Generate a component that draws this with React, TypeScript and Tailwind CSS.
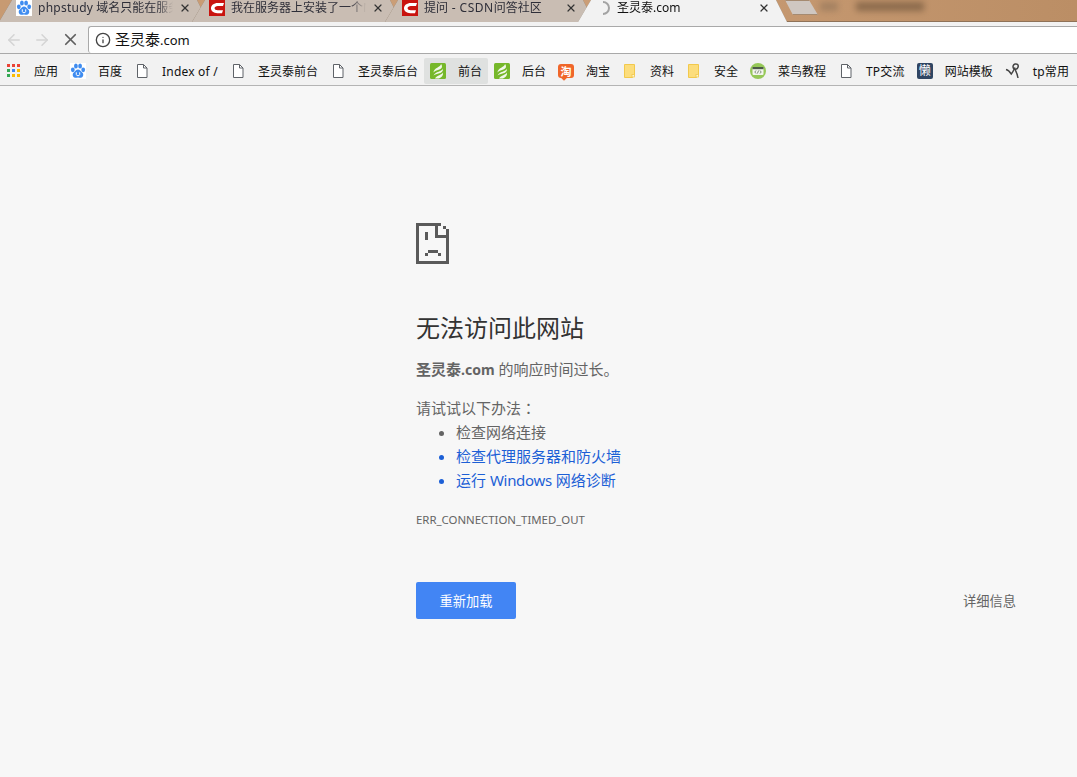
import { ArrowLeft, ArrowRight, Info, X } from 'lucide-react';
import type { ReactNode } from 'react';

const FONT = 'font-["Noto_Sans","Noto_Sans_CJK_SC",sans-serif]';

const BaiduIcon = () => (
  <svg width="16" height="16" viewBox="0 0 16 16" className="shrink-0">
    <rect width="16" height="16" fill="#ffffff" />
    <g fill="#3f8cf0">
      <ellipse cx="2.800" cy="6.800" rx="1.900" ry="2.400" />
      <ellipse cx="5.900" cy="3" rx="1.900" ry="2.500" />
      <ellipse cx="10.100" cy="3" rx="1.900" ry="2.500" />
      <ellipse cx="13.200" cy="6.800" rx="1.900" ry="2.400" />
      <path d="M8 6.400c2 0 2.600 1.900 4.200 3.100 1.800 1.400 1.300 5-1.300 5.200-1.100.1-1.900-.3-2.900-.3s-1.800.4-2.900.3C2.500 14.500 2 10.900 3.800 9.500 5.400 8.300 6 6.400 8 6.400z" />
    </g>
    <path d="M6.300 9.300v2.200c0 1.700 3.400 1.700 3.400 0V9.300" fill="none" stroke="#ffffff" strokeWidth="1" />
  </svg>
);

const CsdnIcon = () => (
  <svg width="16" height="16" viewBox="0 0 16 16" className="shrink-0">
    <rect width="16" height="16" fill="#c9140f" />
    <path d="M15 3H8.800C4.800 3 2 5.300 2 8.300c0 2.900 2.600 4.900 6.400 4.900H13l1-3H8.800C6.800 10.200 5.600 9.400 5.600 8.200 5.600 7 6.900 6 8.900 6H14z" fill="#ffffff" />
  </svg>
);

const Spinner = () => (
  <svg width="16" height="16" viewBox="0 0 16 16" className="shrink-0">
    <path d="M8 2a6 6 0 0 1 0 12" fill="none" stroke="#a3a3a3" strokeWidth="2" />
  </svg>
);

const DocIcon = () => (
  <svg width="16" height="16" viewBox="0 0 16 16" className="shrink-0">
    <path d="M3.500 1.500h6l3.500 3.500v9.500h-9.500z" fill="#ffffff" stroke="#5f6368" strokeWidth="1" />
    <path d="M9.500 1.500v3.500h3.500" fill="none" stroke="#5f6368" strokeWidth="1" />
  </svg>
);

const AppsIcon = () => {
  const colors = ['#ea4335', '#ea4335', '#ea4335', '#34a853', '#4285f4', '#fbbc05', '#34a853', '#fbbc05', '#fbbc05'];
  return (
    <svg width="16" height="16" viewBox="0 0 16 16" className="shrink-0">
      {colors.map((c, i) => (
        <rect key={i} x={1 + (i % 3) * 5} y={1 + Math.floor(i / 3) * 5} width="3" height="3" fill={c} />
      ))}
    </svg>
  );
};

const LeafIcon = () => (
  <svg width="16" height="16" viewBox="0 0 16 16" className="shrink-0">
    <rect width="16" height="16" rx="1.500" fill="#76b82a" />
    <g fill="#ffffff" fillOpacity="0.9">
      <path d="M11 1C11 4 3.500 5 3.500 9.500 6 6.500 12 7 12 3.500 12 2.500 11.600 1.600 11 1z" />
      <path d="M13 5.500C12.500 8.500 5 8.500 3.500 12.500 6 10 13.500 11.500 13 5.500z" />
      <path d="M13 9.500C12 12 7 12 5 15.500h4C11.500 14.500 13.500 12.500 13 9.500z" />
    </g>
  </svg>
);

const TaobaoIcon = () => (
  <span className="relative flex h-[14px] w-4 shrink-0 items-center justify-center rounded-[3px] bg-[#f0662a] text-[11px] leading-none font-bold text-white">
    淘
    <span className="absolute -bottom-[2px] left-[4px] size-[4px] rotate-45 bg-[#f0662a]" />
  </span>
);

const FolderIcon = () => (
  <svg width="16" height="16" viewBox="0 0 16 16" className="shrink-0">
    <path d="M2.500 1.500h10v10.500l-2 2.500h-8z" fill="#fcdd7c" stroke="#f2c94c" strokeWidth="1" />
    <rect x="10" y="11.500" width="2.500" height="2.500" fill="#fff5cf" stroke="#f2c94c" strokeWidth="0.800" />
  </svg>
);

const RunoobIcon = () => (
  <svg width="16" height="16" viewBox="0 0 16 16" className="shrink-0">
    <circle cx="8" cy="8" r="8" fill="#96c858" />
    <rect x="2.500" y="4" width="11" height="8" rx="1" fill="#f3f5ee" />
    <rect x="2.500" y="4" width="11" height="2.200" fill="#4c5a48" />
    <path d="M6 7.500 4.800 9 6 10.500M10 7.500 11.200 9 10 10.500M8.600 7.500 7.400 10.500" fill="none" stroke="#4c5a48" strokeWidth="0.700" />
  </svg>
);

const LanIcon = () => (
  <span className="flex size-4 shrink-0 items-center justify-center rounded-[2px] bg-[#2f4562] text-[12px] leading-none text-white">
    懒
  </span>
);

const SketchIcon = () => (
  <svg width="16" height="16" viewBox="0 0 16 16" className="shrink-0">
    <path d="M1 6.500c2.500.5 4 2.500 5.300 4.500C8 9 9 6.500 10 4.500M10 1c2.200-.5 3.800 1 3 3.200S9.500 7 8.500 5.300 8.200 1.500 10 1zM10.300 7c1.200 2.300 2.200 5 2.700 8" fill="none" stroke="#444444" strokeWidth="1.500" />
  </svg>
);

const bookmarks: { icon: ReactNode; label: string; active?: boolean }[] = [
  { icon: <AppsIcon />, label: '应用' },
  { icon: <BaiduIcon />, label: '百度' },
  { icon: <DocIcon />, label: 'Index of /' },
  { icon: <DocIcon />, label: '圣灵泰前台' },
  { icon: <DocIcon />, label: '圣灵泰后台' },
  { icon: <LeafIcon />, label: '前台', active: true },
  { icon: <LeafIcon />, label: '后台' },
  { icon: <TaobaoIcon />, label: '淘宝' },
  { icon: <FolderIcon />, label: '资料' },
  { icon: <FolderIcon />, label: '安全' },
  { icon: <RunoobIcon />, label: '菜鸟教程' },
  { icon: <DocIcon />, label: 'TP交流' },
  { icon: <LanIcon />, label: '网站模板' },
  { icon: <SketchIcon />, label: 'tp常用' },
];

const Tab = ({ icon, title, active }: { icon: ReactNode; title: ReactNode; active?: boolean }) => (
  <div className={`-ml-4 first:-ml-px ${active ? 'z-10' : ''} [filter:drop-shadow(0_0_0.6px_#7d6a58)]`}>
    <div
      className={`flex h-[22px] w-[209px] items-center gap-1.5 pr-[17px] pb-[6px] pl-[17px] [clip-path:polygon(13px_0,198px_0,209px_100%,0_100%)] ${
        active ? 'bg-[#f2f2f2]' : 'bg-[#c9bdb3]'
      }`}
    >
      {icon}
      <span
        className={`min-w-0 flex-1 overflow-hidden text-xs leading-4 whitespace-nowrap [mask-image:linear-gradient(to_right,black_88%,transparent)] ${
          active ? 'text-[#111111]' : 'text-[#2e2e38]'
        }`}
      >
        {title}
      </span>
      <X size={12} strokeWidth={2.4} className="shrink-0 text-[#333333]" />
    </div>
  </div>
);

const BrowserChrome = () => (
  <header className="shrink-0">
    <div className="relative flex h-[22px] border-b border-[#8f7258] bg-gradient-to-r from-[#c79a72] via-[#cc9f78] to-[#bb8e65]">
      <Tab
        icon={<BaiduIcon />}
        title={
          <>
            <span className="tracking-[0.25px]">phpstudy</span> 域名只能在服务器上访问
          </>
        }
      />
      <Tab icon={<CsdnIcon />} title="我在服务器上安装了一个N" />
      <Tab
        icon={<CsdnIcon />}
        title={
          <>
            提问<span className="tracking-[0.5px]"> - CSDN</span>问答社区
          </>
        }
      />
      <Tab icon={<Spinner />} title="圣灵泰.com" active />
      <div className="ml-[-2px] h-[15px] w-[33px] border border-[#a58a70] bg-[#cfc7c1] [clip-path:polygon(0_0,24px_0,100%_100%,8px_100%)]" />
      <div className="absolute top-[2px] left-[820px] h-[9px] w-[18px] bg-[#8f7358] opacity-60 blur-[3px]" />
      <div className="absolute top-[2px] left-[856px] h-[9px] w-[68px] bg-[#75593f] opacity-70 blur-[3px]" />
    </div>
    <div className="flex h-[32px] items-end border-b border-[#a9a9a9] bg-[#f2f2f2]">
      <div className="flex h-[27px] w-[88px] shrink-0 items-center pl-[5px]">
        <ArrowLeft size={18} strokeWidth={2} className="text-[#d4d4d4]" />
        <ArrowRight size={18} strokeWidth={2} className="ml-[10px] text-[#d4d4d4]" />
        <X size={19} strokeWidth={2.2} className="ml-[10px] text-[#5f5f5f]" />
      </div>
      <div className="flex h-[27px] flex-1 items-center gap-1 rounded-tl-[3px] rounded-bl-[3px] border-t border-l border-[#a9a9a9] bg-white pb-px pl-[6px]">
        <Info size={16} strokeWidth={2} className="text-[#444444]" />
        <span className="text-[15px] leading-5 text-[#111111]">
          圣灵泰<span className="text-[13px]">.com</span>
        </span>
      </div>
    </div>
    <nav className="flex h-[32px] items-start border-b border-[#b4b4b4] bg-[#f2f2f2] pt-[4px]">
      {bookmarks.map((b) => (
        <div
          key={b.label}
          className={`flex h-[26px] items-center gap-3 rounded-[2px] px-1.5 text-xs whitespace-nowrap text-[#111111] ${
            b.active ? 'bg-[#dfe1e0]' : ''
          }`}
        >
          {b.icon}
          <span className={`pt-[2px] ${/[a-zA-Z]/.test(b.label) ? 'tracking-[0.2px]' : ''}`}>{b.label}</span>
        </div>
      ))}
    </nav>
  </header>
);

const SadPage = () => (
  <svg width="33" height="41" viewBox="0 0 33 41" fill="#5a5a5a" shapeRendering="crispEdges">
    <rect x="0" y="0" width="25" height="3" />
    <rect x="0" y="0" width="3" height="41" />
    <rect x="0" y="38" width="33" height="3" />
    <rect x="30" y="6" width="3" height="35" />
    <rect x="27" y="3" width="3" height="3" />
    <rect x="19" y="0" width="3" height="15" />
    <rect x="19" y="12" width="14" height="3" />
    <rect x="9" y="9" width="3" height="8" />
    <rect x="12" y="27" width="10" height="3" />
    <rect x="9" y="30" width="3" height="3" />
    <rect x="22" y="30" width="3" height="3" />
  </svg>
);

export default function App() {
  return (
    <div className={`flex h-[777px] flex-col overflow-hidden bg-[#f7f7f7] ${FONT}`}>
      <BrowserChrome />
      <main className="ml-[416px] w-[600px] pt-[137px] text-[15px] leading-6 text-[#646464]">
        <SadPage />
        <h1 className="mt-[46px] text-2xl leading-9 font-normal text-[#333333]">无法访问此网站</h1>
        <p className="mt-[11px]">
          <strong className="font-bold">
            圣灵泰<span className="text-[14px]">.com</span>
          </strong>{' '}
          的响应时间过长。
        </p>
        <p className="mt-[14px] h-6">
          请试试以下办法<span className='font-["Noto_Sans_CJK_TC"]'>：</span>
        </p>
        <ul className="list-disc pl-10">
          <li>检查网络连接</li>
          <li className="text-[#1c5fd6]">检查代理服务器和防火墙</li>
          <li className="text-[#1c5fd6]">
            运行 <span className="tracking-[-0.3px]">Windows</span> 网络诊断
          </li>
        </ul>
        <div className="mt-[16px] text-[11.4px] leading-6">ERR_CONNECTION_TIMED_OUT</div>
        <div className="mt-[50px] flex items-center justify-between">
          <button className="h-[37px] w-[100px] rounded-[2px] bg-[#4285f4] text-[13.25px] text-white">重新加载</button>
          <button className="text-[13.25px]">详细信息</button>
        </div>
      </main>
    </div>
  );
}
